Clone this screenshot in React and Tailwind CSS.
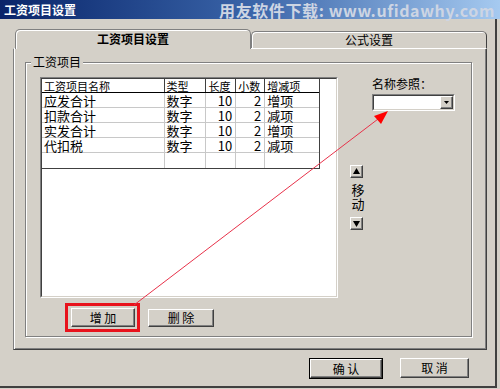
import React from "react";

const btn3d =
  "border border-t-white border-l-white border-r-[#404040] border-b-[#404040] shadow-[inset_-1px_-1px_0_#808080] bg-[#d4d0c8]";

function Btn({ children, className = "" }) {
  return (
    <div className={`${btn3d} flex items-center justify-center text-[12px] leading-none text-black ${className}`}>
      {children}
    </div>
  );
}

function Tri({ up }) {
  return (
    <svg width="7" height="7" viewBox="0 0 7 7">
      {up ? <polygon points="0,6 7,6 3.5,0" fill="#000" /> : <polygon points="0,1 7,1 3.5,7" fill="#000" />}
    </svg>
  );
}

const rows = [
  ["应发合计", "数字", "10", "2", "增项"],
  ["扣款合计", "数字", "10", "2", "减项"],
  ["实发合计", "数字", "10", "2", "增项"],
  ["代扣税", "数字", "10", "2", "减项"],
  ["", "", "", "", ""],
];
const widths = ["w-[123px]", "w-[42px]", "w-[30px]", "w-[29px]", "w-[54px]"];
const headers = ["工资项目名称", "类型", "长度", "小数", "增减项"];

export default function App() {
  return (
    <div className="relative w-[500px] h-[389px] overflow-hidden bg-[#d4d0c8] font-['Noto_Sans_CJK_SC','Noto_Sans',sans-serif] text-black">
      {/* title bar */}
      <div className="h-[19px] w-[500px] bg-gradient-to-r from-[#0a246a] via-[#3a64a8] to-[#a6caf0] flex items-center justify-between pl-[4px] pr-[5px]">
        <span className="text-white font-bold text-[12px] leading-none">工资项目设置</span>
        <span className="text-[#cdd5e3] font-bold text-[16px] leading-none tracking-[0.6px]">
          用友软件下载: www.ufidawhy.com
        </span>
      </div>

      <div className="w-[497px] h-[369px] border-r-2 border-b-2 border-[#404040] flex flex-col">
        {/* tab control */}
        <div className="pl-[13px] pt-[10px]">
          <div className="flex items-end h-[19px] pl-[2px]">
            <div className="relative z-10 w-[236px] h-[20px] -mb-[1px] bg-[#d4d0c8] border border-b-0 border-[#808080] rounded-t-[5px] shadow-[inset_1px_1px_0_#fff] flex items-start justify-center pt-[3px]">
              <span className="text-[12px] leading-none font-bold">工资项目设置</span>
            </div>
            <div className="w-[236px] h-[17px] bg-[#d4d0c8] border border-b-0 border-[#808080] border-r-[#404040] rounded-t-[5px] shadow-[inset_1px_1px_0_#fff] flex items-start justify-center pt-[2px]">
              <span className="text-[12px] leading-none">公式设置</span>
            </div>
          </div>
          {/* panel */}
          <div className="w-[474px] h-[302px] border border-t-white border-l-[#808080] border-r-[#404040] border-b-[#404040] shadow-[inset_1px_0_0_#fff,inset_-1px_-1px_0_#808080] pl-[11px] pt-[13px]">
            {/* group box */}
            <div className="relative w-[447px] h-[275px] border border-[#808080] shadow-[inset_1px_1px_0_#fff,1px_1px_0_#fff] pl-[14px] pt-[14px]">
              <span className="absolute left-[5px] -top-[8px] bg-[#d4d0c8] px-[2px] text-[12px] leading-[14px]">工资项目</span>
              <div className="flex items-start">
                {/* list box */}
                <div className="w-[298px] h-[221px] border border-t-[#808080] border-l-[#808080] border-r-white border-b-white">
                  <div className="w-full h-full bg-white border border-t-[#404040] border-l-[#404040] border-r-[#d4d0c8] border-b-[#d4d0c8]">
                    <div className="w-[278px] border-r border-b border-[#404040]">
                      <div className="flex h-[14px] border-b border-black">
                        {headers.map((h, i) => (
                          <div
                            key={i}
                            className={`${widths[i]} ${i < 4 ? "border-r border-[#404040]" : ""} text-[11px] leading-[14px] pl-[2px] whitespace-nowrap`}
                          >
                            {h}
                          </div>
                        ))}
                      </div>
                      {rows.map((r, ri) => (
                        <div key={ri} className={`flex h-[15px] ${ri < 4 ? "border-b border-[#c8c8c8]" : ""}`}>
                          {r.map((c, i) => (
                            <div
                              key={i}
                              className={`${widths[i]} ${i < 4 ? "border-r border-[#c8c8c8]" : ""} text-[13px] leading-[15px] whitespace-nowrap ${
                                i === 2 || i === 3 ? "text-right pr-[3px]" : "pl-[2px]"
                              } ${i === 2 ? "text-[12px]" : ""}`}
                            >
                              {c}
                            </div>
                          ))}
                        </div>
                      ))}
                    </div>
                  </div>
                </div>
                {/* move buttons */}
                <div className="ml-[12px] mt-[88px] flex flex-col items-center w-[13px]">
                  <div className={`${btn3d} w-[13px] h-[13px] flex items-center justify-center`}>
                    <Tri up />
                  </div>
                  <div className="mt-[5px] text-[13px] leading-[14px] flex flex-col items-center ml-[3px]">
                    <span>移</span>
                    <span>动</span>
                  </div>
                  <div className={`${btn3d} mt-[6px] w-[13px] h-[13px] flex items-center justify-center`}>
                    <Tri />
                  </div>
                </div>
                {/* name reference */}
                <div className="ml-[9px] flex flex-col">
                  <span className="text-[12px] leading-[12px] mt-[1px]">名称参照：</span>
                  <div className="mt-[4px] w-[83px] h-[17px] border border-t-[#808080] border-l-[#808080] border-r-white border-b-white">
                    <div className="w-full h-full bg-white border border-t-[#404040] border-l-[#404040] border-r-[#d4d0c8] border-b-[#d4d0c8] flex justify-end">
                      <div className={`${btn3d} w-[13px] h-[13px] flex items-center justify-center`}>
                        <svg width="5" height="3" viewBox="0 0 5 3">
                          <polygon points="0,0 5,0 2.5,3" fill="#000" />
                        </svg>
                      </div>
                    </div>
                  </div>
                </div>
              </div>
              {/* add / delete */}
              <div className="flex items-start mt-[5px] ml-[25px]">
                <div className="border-[3px] border-[#e8121c] pl-[3px] pr-[2px] py-[2px]">
                  <Btn className="w-[64px] h-[19px]">增&nbsp;加</Btn>
                </div>
                <Btn className="ml-[8px] mt-[6px] w-[66px] h-[18px]">删&nbsp;除</Btn>
              </div>
            </div>
          </div>
        </div>
        {/* bottom buttons */}
        <div className="flex items-start pl-[309px] mt-[8px]">
          <div className="border border-black">
            <Btn className="w-[72px] h-[19px]">确&nbsp;认</Btn>
          </div>
          <Btn className="ml-[17px] w-[69px] h-[20px]">取&nbsp;消</Btn>
        </div>
      </div>

      {/* red annotation arrow */}
      <svg className="absolute inset-0 pointer-events-none" width="500" height="389" viewBox="0 0 500 389">
        <line x1="134" y1="305" x2="382" y2="116" stroke="#e8324a" strokeWidth="1" />
        <polygon points="388,111 374,116 381,124" fill="#ff0000" />
      </svg>
    </div>
  );
}
